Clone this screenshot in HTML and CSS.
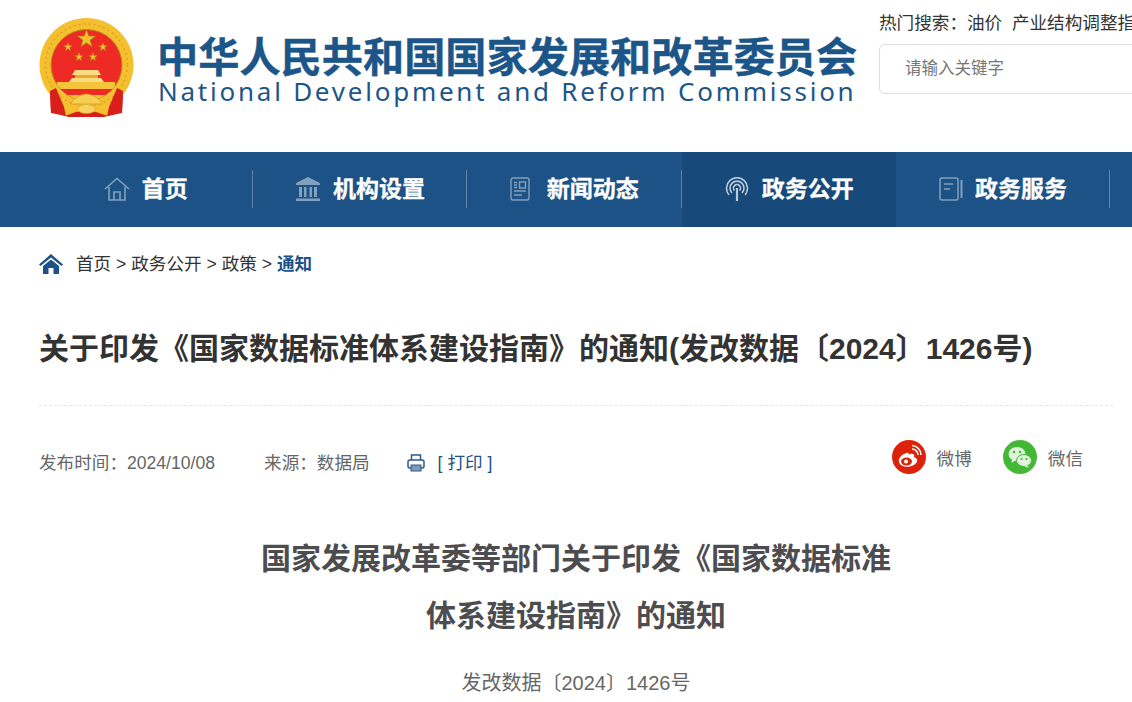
FILE: index.html
```html
<!DOCTYPE html>
<html lang="zh-CN">
<head>
  <meta charset="UTF-8" />
  <meta name="viewport" content="width=device-width, initial-scale=1.0"/>
  <title>关于印发《国家数据标准体系建设指南》的通知</title>
  <link rel="stylesheet" href="styles.css">
</head>
<body>
  <header class="top">
    <svg class="emblem" viewBox="0 0 96 102">
      <defs>
        <path id="star" d="M0 -10 L2.350 -3.240 L9.510 -3.090 L3.800 1.240 L5.880 8.090 L0 4 L-5.880 8.090 L-3.800 1.240 L-9.510 -3.090 L-2.350 -3.240 Z"/>
        <clipPath id="disc"><circle cx="48.500" cy="47" r="35.500"/></clipPath>
      </defs>
      <path d="M17 70 L12 74 L13 94 L24 97 L30 99 L66 99 L74 97 L84 94 L85 74 L80 70 Z" fill="#d81f1a"/>
      <path d="M16 76 L17 93 M21 78 L22 96 M76 78 L75 96 M81 76 L80 93" stroke="#a81612" stroke-width="1" fill="none"/>
      <circle cx="48.500" cy="47" r="47" fill="#f4c02f"/>
      <circle cx="48.500" cy="47" r="41" fill="none" stroke="#e3a01e" stroke-width="1.500" stroke-dasharray="2 3"/>
      <circle cx="48.500" cy="47" r="35.500" fill="#ee2a24" stroke="#b98a1a" stroke-width="1"/>
      <g clip-path="url(#disc)">
        <rect x="19" y="64" width="58" height="7" fill="#f5c43a"/>
        <rect x="10" y="71" width="78" height="6" fill="#ee2a24"/>
        <rect x="10" y="77" width="78" height="8" fill="#f4c02f"/>
      </g>
      <path d="M37 52 H60 L63 57 H34 Z" fill="#f9dc85"/>
      <rect x="37" y="57" width="23" height="3" fill="#e9aa26"/>
      <path d="M34 60 H63 L66 64 H31 Z" fill="#f9dc85"/>
      <g fill="#f2c230" stroke="#a87d18" stroke-width=".8">
        <use href="#star" transform="translate(48.500 21) scale(.95)"/>
        <use href="#star" transform="translate(30 29) scale(.45)" stroke-width="1.200"/>
        <use href="#star" transform="translate(65 29) scale(.45)" stroke-width="1.200"/>
        <use href="#star" transform="translate(41 39) scale(.45)" stroke-width="1.200"/>
        <use href="#star" transform="translate(55 39) scale(.45)" stroke-width="1.200"/>
      </g>
      <path d="M35 82 Q48 70 62 82 L64 86 H33 Z" fill="#f6cd55" stroke="#d99d1f" stroke-width=".8"/>
      <path d="M20 84 L38 89 L48 85 L59 89 L77 84 L70 98 L58 94 L48 92 L38 94 L27 98 Z" fill="#f4c02f"/>
      <ellipse cx="48.500" cy="91" rx="9" ry="4.500" fill="#f8d25f" stroke="#d99d1f" stroke-width=".6"/>
      <path d="M12 73 L18 70 L26 89 L28 98 L13 95 Z M85 73 L79 70 L71 89 L69 98 L84 95 Z" fill="#d81f1a"/>
    </svg>
    <div class="brand">
      <div class="brand-cn">中华人民共和国国家发展和改革委员会</div>
      <div class="brand-en">National Development and Reform Commission</div>
    </div>
    <div class="search">
      <div class="hot">热门搜索：油价&nbsp;&nbsp;产业结构调整指导目录</div>
      <div class="search-box">请输入关键字</div>
    </div>
  </header>

  <nav class="nav">
    <a class="nav-item">
      <svg class="nav-icon" viewBox="0 0 26 24" fill="none" stroke="#fff" stroke-width="1.600">
        <path d="M1 12 L13 1.500 L25 12"/><path d="M5 10 V23 H21 V10"/><path d="M10 23 V15 H16 V23"/>
      </svg>
      首页
    </a>
    <a class="nav-item">
      <svg class="nav-icon" viewBox="0 0 26 24" fill="#fff">
        <path d="M13 0 L25 6 V8 H1 V6 Z"/><rect x="4" y="10" width="3" height="10"/><rect x="9" y="10" width="2.500" height="10"/><rect x="14.500" y="10" width="2.500" height="10"/><rect x="19" y="10" width="3" height="10"/><rect x="1" y="21.500" width="24" height="2.500"/>
      </svg>
      机构设置
    </a>
    <a class="nav-item">
      <svg class="nav-icon icon-news" viewBox="0 0 20 24" fill="none" stroke="#fff" stroke-width="1.400">
        <rect x="1" y="1" width="18" height="22" rx="2"/><rect x="9.500" y="5" width="6" height="6"/><path d="M4 5.500 H7 M4 8 H7 M4 10.500 H7 M4 14 H16 M4 18 H12"/>
      </svg>
      新闻动态
    </a>
    <a class="nav-item active">
      <svg class="nav-icon icon-signal" viewBox="0 0 24 24" fill="none" stroke="#fff" stroke-width="1.600">
        <path d="M4 18 A10.500 10.500 0 1 1 20 18"/><path d="M7 16 A7 7 0 1 1 17 16"/><path d="M9.500 13.500 A3.500 3.500 0 1 1 14.500 13.500"/><path d="M12 11 V24" stroke-width="2.200"/>
      </svg>
      政务公开
    </a>
    <a class="nav-item">
      <svg class="nav-icon icon-book" viewBox="0 0 24 24" fill="none" stroke="#fff" stroke-width="1.500">
        <rect x="1" y="1" width="18" height="22" rx="2"/><path d="M5 7 H14 M5 12 H11"/><path d="M22.500 3 V21" stroke-width="2"/>
      </svg>
      政务服务
    </a>
  </nav>

  <main class="page">
    <div class="crumbs">
      <svg class="home" viewBox="0 0 24 20" fill="#1c5285">
        <path d="M12 0 L24 10.500 L22.500 12 L12 3.500 L1.500 12 L0 10.500 Z"/><path d="M4 12 L12 5.500 L20 12 V20 H14.500 V14 H9.500 V20 H4 Z"/>
      </svg>
      <span class="trail">首页 &gt; 政务公开 &gt; 政策 &gt; <b class="here">通知</b></span>
    </div>

    <h1 class="title">关于印发《国家数据标准体系建设指南》的通知(发改数据〔2024〕1426号)</h1>

    <div class="meta">
      <span class="date">发布时间：2024/10/08</span>
      <span class="source">来源：数据局</span>
      <svg class="print-icon" viewBox="0 0 18 18">
        <path d="M4.500 6 V1 H13.500 V6" fill="none" stroke="#2b5a8a" stroke-width="1.500"/>
        <rect x="1" y="6" width="16" height="8" rx="2" fill="none" stroke="#2b5a8a" stroke-width="1.500"/>
        <rect x="4" y="11" width="10" height="6" fill="#7d9ab8" stroke="#2b5a8a" stroke-width="1"/>
      </svg>
      <span class="print">[ 打印 ]</span>
      <div class="share">
        <svg class="share-icon" viewBox="0 0 34 34">
          <circle cx="17" cy="17" r="17" fill="#dc2209"/>
          <path d="M14.500 13 C9 14.500 6 19 7 22 C8 26 13 27.500 18 26.500 C23 25.500 26 22 25 19.500 C24.500 18 23 17.500 22 17 C23 14.500 21 13 18 14 C17 14.500 16.500 14.500 16.500 13.500 C16.500 12.500 15.500 12.700 14.500 13 Z" fill="#fff"/>
          <ellipse cx="14.500" cy="21.500" rx="5.500" ry="4" fill="#dc2209"/>
          <circle cx="14" cy="21.500" r="2" fill="#fff"/>
          <path d="M20 9 A6 6 0 0 1 26 15 M20 5.500 A9.500 9.500 0 0 1 29 15" fill="none" stroke="#fff" stroke-width="1.600"/>
        </svg>
        <span class="share-text">微博</span>
        <svg class="share-icon wechat" viewBox="0 0 34 34">
          <circle cx="17" cy="17" r="17" fill="#43b835"/>
          <ellipse cx="14" cy="14" rx="8.500" ry="7" fill="#dff3da"/>
          <path d="M9 19 L8.500 23 L13 20 Z" fill="#dff3da"/>
          <ellipse cx="21" cy="20.500" rx="7.500" ry="6" fill="#dff3da" stroke="#43b835" stroke-width="1"/>
          <path d="M24 25 L26 28 L21 26 Z" fill="#dff3da"/>
          <circle cx="11" cy="12" r="1.300" fill="#43b835"/><circle cx="17" cy="12" r="1.300" fill="#43b835"/>
          <circle cx="18.500" cy="19" r="1.100" fill="#43b835"/><circle cx="23.500" cy="19" r="1.100" fill="#43b835"/>
        </svg>
        <span class="share-text">微信</span>
      </div>
    </div>

    <article class="article">
      <h2 class="article-title">国家发展改革委等部门关于印发《国家数据标准<br>体系建设指南》的通知</h2>
      <p class="doc-no">发改数据〔2024〕1426号</p>
    </article>
  </main>
</body>
</html>
```

FILE: styles.css
```css
html, body {
  margin: 0;
  padding: 0;
}
body {
  font-family: "Liberation Sans", "Noto Sans CJK SC", sans-serif;
  font-size: 17.6px;
  color: #333;
  background: #fff;
  height: 702px;
  overflow: hidden;
}
.top {
  display: flex;
  height: 152px;
  padding-left: 38px;
  overflow: hidden;
}
.emblem {
  flex: none;
  width: 96px;
  height: 102px;
  margin-top: 18px;
}
.brand {
  flex: none;
  width: 700px;
  margin-left: 23px;
  padding-top: 36px;
  color: #1c5689;
}
.brand-cn {
  font-size: 41.200px;
  font-weight: bold;
  line-height: 44px;
  white-space: nowrap;
  -webkit-text-stroke: 0.4px #1c5689;
}
.brand-en {
  font-family: "Noto Sans", sans-serif;
  font-size: 26px;
  line-height: 22px;
  letter-spacing: 2.760px;
  padding-left: 1px;
  white-space: nowrap;
}
.search {
  flex: none;
  width: 320px;
  margin-left: 22px;
  padding-top: 10px;
}
.hot {
  line-height: 26px;
  white-space: nowrap;
}
.search-box {
  box-sizing: border-box;
  height: 50px;
  margin-top: 8px;
  padding-left: 25px;
  line-height: 47px;
  font-size: 16.500px;
  color: #777;
  border: 1px solid #ddd;
  border-radius: 6px;
}
.nav {
  display: flex;
  height: 75px;
  padding-left: 38.500px;
  background: #1c5285;
}
.nav-item {
  box-sizing: border-box;
  flex: none;
  width: 214.350px;
  display: flex;
  align-items: center;
  justify-content: center;
  gap: 12px;
  padding-bottom: 6px;
  color: #fff;
  font-size: 23px;
  font-weight: bold;
  -webkit-text-stroke: 0.3px #fff;
  position: relative;
}
.nav-item::after {
  content: "";
  position: absolute;
  right: 0;
  top: 18px;
  height: 38px;
  width: 1px;
  background: rgba(255,255,255,0.3);
}
.active {
  background: #174a7a;
}
.active::after {
  display: none;
}
.nav-icon {
  width: 26px;
  height: 24px;
  margin-top: 4px;
  opacity: 0.45;
}
.icon-news {
  width: 20px;
  margin-right: 5px;
}
.icon-signal {
  width: 26px;
  opacity: 0.7;
}
.icon-book {
  width: 24px;
}
.page {
  padding: 0 19px 0 39px;
}
.crumbs {
  display: flex;
  align-items: center;
  height: 74px;
  gap: 13px;
}
.home {
  width: 24px;
  height: 20px;
}
.trail {
  padding-bottom: 4px;
}
.here {
  color: #1c5285;
}
.title {
  margin: 0;
  padding: 26px 0 34px;
  font-size: 30px;
  line-height: 44px;
  color: #333;
  border-bottom: 1px dashed #e6e6e6;
  white-space: nowrap;
}
.meta {
  display: flex;
  align-items: center;
  height: 110px;
  color: #666;
}
.source {
  margin-left: 49px;
}
.print-icon {
  width: 18px;
  height: 18px;
  margin-left: 37px;
  margin-top: 3px;
}
.print {
  margin-left: 13px;
  color: #1c5285;
}
.share {
  display: flex;
  align-items: center;
  margin-left: auto;
  margin-right: 30px;
  margin-top: -8px;
}
.share-icon {
  width: 34px;
  height: 34px;
  margin-right: 11px;
}
.wechat {
  margin-left: 31px;
}
.article {
  text-align: center;
  padding-top: 14px;
}
.article-title {
  margin: 0;
  font-size: 30px;
  line-height: 57px;
  color: #4d4d4f;
}
.doc-no {
  margin: 24px 0 0;
  font-size: 20px;
  line-height: 30px;
  color: #666;
}
```
